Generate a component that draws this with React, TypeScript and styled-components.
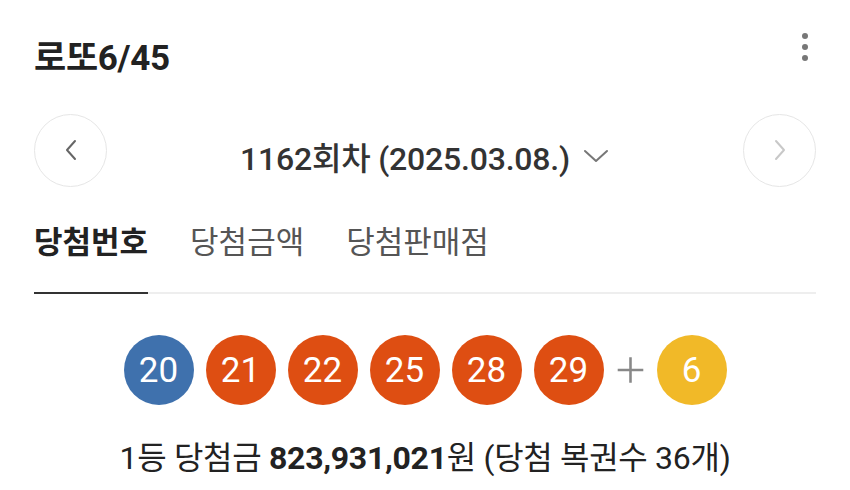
import React from 'react';
import styled, { createGlobalStyle } from 'styled-components';

const Global = createGlobalStyle`
  html, body {
    margin: 0;
    padding: 0;
    background: #fff;
  }
  body {
    font-family: Roboto, "Noto Sans CJK KR", sans-serif;
    color: #222;
  }
`;

const Page = styled.div`
  width: 850px;
  height: 490px;
  padding: 0 34px;
  box-sizing: border-box;
  overflow: hidden;
`;

const Header = styled.div`
  height: 108px;
  display: flex;
  align-items: center;
  justify-content: space-between;
`;

const Title = styled.h1`
  margin: 0;
  font-size: 35px;
  font-weight: 700;
  color: #222;
  letter-spacing: -0.3px;
`;

const Kebab = styled.button`
  border: none;
  background: none;
  padding: 0;
  margin: 0 8px 14px 0;
  display: flex;
  flex-direction: column;
  gap: 5px;
`;

const Dot = styled.span`
  width: 6px;
  height: 6px;
  border-radius: 50%;
  background: #777;
`;

const RoundNav = styled.div`
  height: 84px;
  display: flex;
  align-items: center;
  justify-content: space-between;
`;

const CircleButton = styled.button<{ $faded?: boolean }>`
  width: 73px;
  height: 73px;
  border-radius: 50%;
  border: 1px solid #e6e6e6;
  background: #fff;
  display: flex;
  align-items: center;
  justify-content: center;
  padding: 0;
  color: ${(p) => (p.$faded ? '#c8c8c8' : '#666')};
`;

const RoundLabel = styled.div`
  display: flex;
  align-items: center;
  gap: 12px;
  font-size: 32px;
  font-weight: 500;
  color: #333;
  padding-top: 12px;
  letter-spacing: -0.2px;
`;

const Tabs = styled.div`
  height: 100px;
  display: flex;
  align-items: stretch;
  gap: 42px;
  border-bottom: 2px solid #eeeeee;
`;

const Tab = styled.div<{ $active?: boolean }>`
  display: flex;
  align-items: center;
  padding-bottom: 8px;
  font-size: 31px;
  font-weight: ${(p) => (p.$active ? 700 : 400)};
  color: ${(p) => (p.$active ? '#222' : '#555')};
  box-shadow: ${(p) => (p.$active ? 'inset 0 -2px 0 #333' : 'none')};
  margin-bottom: -2px;
`;

const Balls = styled.div`
  margin-top: 41px;
  display: flex;
  justify-content: center;
  align-items: center;
  gap: 12px;
`;

const Ball = styled.div<{ $color: string }>`
  width: 70px;
  height: 70px;
  border-radius: 50%;
  background: ${(p) => p.$color};
  color: #fff;
  font-size: 35px;
  display: flex;
  align-items: center;
  justify-content: center;
`;

const Plus = styled.span`
  width: 29px;
  display: flex;
  justify-content: center;
  color: #888;
`;

const Prize = styled.p`
  margin: 31px 0 0;
  text-align: center;
  font-size: 32px;
  line-height: 44px;
  color: #222;
  letter-spacing: -0.3px;
`;

const Amount = styled.b`
  font-weight: 700;
`;

function ballColor(n: number) {
  if (n <= 10) return '#f1b928';
  if (n <= 20) return '#3f71ad';
  if (n <= 30) return '#de4e12';
  if (n <= 40) return '#888';
  return '#6cb33f';
}

const numbers = [20, 21, 22, 25, 28, 29];
const bonus = 6;

export default function App() {
  return (
    <>
      <Global />
      <Page>
        <Header>
          <Title>로또6/45</Title>
          <Kebab aria-label="menu">
            <Dot />
            <Dot />
            <Dot />
          </Kebab>
        </Header>

        <RoundNav>
          <CircleButton aria-label="prev">
            <svg width="28" height="28" viewBox="0 0 28 28" fill="none" stroke="currentColor" strokeWidth="2" strokeLinecap="round" strokeLinejoin="round">
              <path d="M18 5l-8 9 8 9" />
            </svg>
          </CircleButton>
          <RoundLabel>
            1162회차 (2025.03.08.)
            <svg width="28" height="20" viewBox="0 0 28 20" fill="none" stroke="#777" strokeWidth="2" strokeLinecap="round" strokeLinejoin="round">
              <path d="M3 5l11 10 11-10" />
            </svg>
          </RoundLabel>
          <CircleButton $faded aria-label="next">
            <svg width="28" height="28" viewBox="0 0 28 28" fill="none" stroke="currentColor" strokeWidth="2" strokeLinecap="round" strokeLinejoin="round">
              <path d="M10 5l8 9-8 9" />
            </svg>
          </CircleButton>
        </RoundNav>

        <Tabs>
          <Tab $active>당첨번호</Tab>
          <Tab>당첨금액</Tab>
          <Tab>당첨판매점</Tab>
        </Tabs>

        <Balls>
          {numbers.map((n) => (
            <Ball key={n} $color={ballColor(n)}>
              {n}
            </Ball>
          ))}
          <Plus>
            <svg width="34" height="34" viewBox="0 0 34 34" stroke="currentColor" strokeWidth="3">
              <path d="M17 2v30M2 17h30" />
            </svg>
          </Plus>
          <Ball $color={ballColor(bonus)}>{bonus}</Ball>
        </Balls>

        <Prize>
          1등 당첨금 <Amount>823,931,021</Amount>원 (당첨 복권수 36개)
        </Prize>
      </Page>
    </>
  );
}
